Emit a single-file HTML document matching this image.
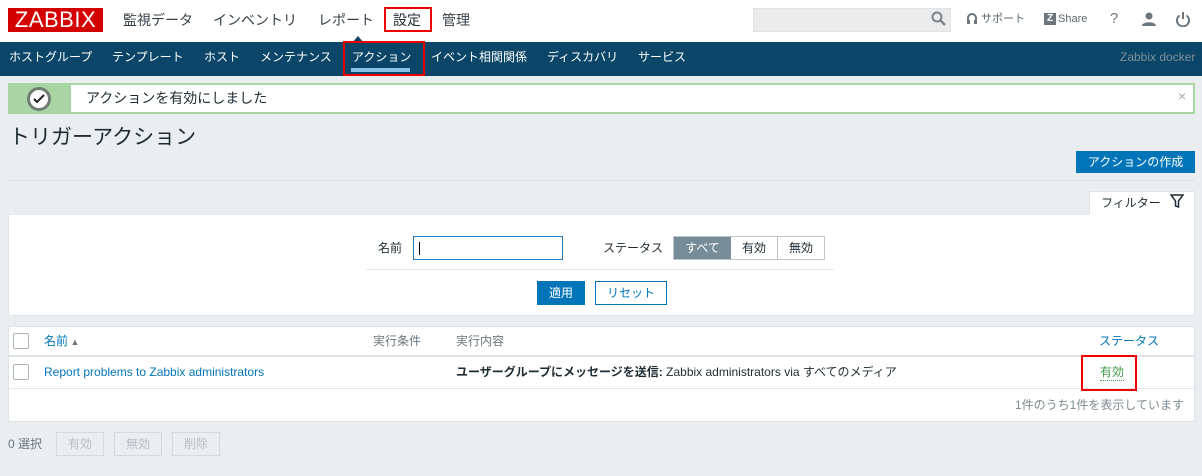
<!DOCTYPE html>
<html><head><meta charset="utf-8"><style>
*{box-sizing:border-box;margin:0;padding:0}
body{width:1202px;height:476px;background:#ebeef0;font-family:"Liberation Sans","Noto Sans CJK JP",sans-serif;font-size:12px;color:#1f2c33;position:relative;overflow:hidden;line-height:20px}
.a{position:absolute;white-space:nowrap}
.hdr{left:0;top:0;width:1202px;height:42px;background:#fff}
.logo{left:8px;top:8px;width:95px;height:24px;background:#d40000;color:#fff;font-size:22px;line-height:24px;text-align:center;letter-spacing:0.5px}
.mm{top:10px;font-size:14px;color:#384149}
.nav{left:0;top:42px;width:1202px;height:34px;background:#0b4668}
.sm{top:47px;font-size:12px;color:#fff}
.red{border:2px solid #e00}
.btn{border:1px solid #0275b8;text-align:center;line-height:20px;font-size:12px}
</style></head><body>
<div class="a hdr"></div>
<div class="a logo">ZABBIX</div>
<div class="a mm" style="left:123px">監視データ</div>
<div class="a mm" style="left:213px">インベントリ</div>
<div class="a mm" style="left:318px">レポート</div>
<div class="a mm" style="left:393px;color:#1f2c33">設定</div>
<div class="a mm" style="left:442px">管理</div>
<div class="a red" style="left:384px;top:7px;width:48px;height:25px"></div>
<div class="a" style="left:753px;top:8px;width:198px;height:24px;background:#ebebeb;border:1px solid #dfe4e7"></div>
<svg class="a" style="left:931px;top:11px" width="16" height="16"><circle cx="6" cy="6" r="4.5" fill="none" stroke="#7a858d" stroke-width="2"/><path d="M9.5 9.5L14 14" stroke="#7a858d" stroke-width="2.5"/></svg>
<svg class="a" style="left:966px;top:12px" width="12" height="14"><path d="M2 10V6a4 4 0 0 1 8 0v4" fill="none" stroke="#6b767e" stroke-width="2"/><rect x="1" y="8" width="3" height="4" fill="#6b767e"/><rect x="8" y="8" width="3" height="4" fill="#6b767e"/></svg>
<div class="a" style="left:981px;top:9px;font-size:11px;color:#5c6770">サポート</div>
<div class="a" style="left:1044px;top:13px;width:12px;height:12px;background:#6b767e;color:#fff;font-size:10px;font-weight:bold;line-height:12px;text-align:center">Z</div>
<div class="a" style="left:1058px;top:9px;font-size:11px;color:#5c6770">Share</div>
<div class="a" style="left:1110px;top:9px;font-size:15px;color:#6b767e">?</div>
<svg class="a" style="left:1142px;top:11px" width="14" height="16"><circle cx="7" cy="5" r="3.5" fill="#6b767e"/><path d="M0 15c0-5 14-5 14 0z" fill="#6b767e"/></svg>
<svg class="a" style="left:1175px;top:11px" width="16" height="16"><path d="M4.5 4.5a6 6 0 1 0 7 0" fill="none" stroke="#6b767e" stroke-width="2"/><path d="M8 1v7" stroke="#6b767e" stroke-width="2"/></svg>
<div class="a nav"></div>
<svg class="a" style="left:352px;top:36px" width="12" height="7"><path d="M0 7L6 0L12 7z" fill="#0b4668"/></svg>
<div class="a sm" style="left:9px">ホストグループ</div>
<div class="a sm" style="left:112px">テンプレート</div>
<div class="a sm" style="left:204px">ホスト</div>
<div class="a sm" style="left:260px">メンテナンス</div>
<div class="a sm" style="left:352px">アクション</div>
<div class="a" style="left:351px;top:68px;width:59px;height:4px;background:#8bc4eb"></div>
<div class="a red" style="left:343px;top:41px;width:82px;height:35px"></div>
<div class="a sm" style="left:431px">イベント相関関係</div>
<div class="a sm" style="left:547px">ディスカバリ</div>
<div class="a sm" style="left:638px">サービス</div>
<div class="a sm" style="left:1120px;color:#7e8f9b;font-size:12px">Zabbix docker</div>
<div class="a" style="left:8px;top:83px;width:1187px;height:31px;background:#fff;border:2px solid #a9d5a5"></div>
<div class="a" style="left:10px;top:85px;width:61px;height:27px;background:#a9d5a5"></div>
<div class="a" style="left:27px;top:87px;width:24px;height:24px;border-radius:50%;background:#fff;border:3px solid #6f7e73"></div>
<svg class="a" style="left:32px;top:92px" width="14" height="14"><path d="M2 7l3 3l7-7" fill="none" stroke="#222" stroke-width="2"/></svg>
<div class="a" style="left:86px;top:88px;font-size:14px">アクションを有効にしました</div>
<div class="a" style="left:1178px;top:86px;font-size:14px;color:#a0abb2">×</div>
<div class="a" style="left:9px;top:125px;font-size:21px;line-height:26px">トリガーアクション</div>
<div class="a btn" style="left:1076px;top:151px;width:119px;height:22px;background:#0275b8;color:#fff">アクションの作成</div>
<div class="a" style="left:8px;top:180px;width:1187px;height:1px;background:#dde2e5"></div>
<div class="a" style="left:1089px;top:191px;width:106px;height:25px;background:#fff;border:1px solid #dfe4e7;border-bottom:none"></div>
<div class="a" style="left:1101px;top:193px;font-size:12px">フィルター</div>
<svg class="a" style="left:1170px;top:194px" width="14" height="14"><path d="M1 1h12L8.5 7v6l-3-1V7z" fill="none" stroke="#1f2c33" stroke-width="1.5"/></svg>
<div class="a" style="left:8px;top:215px;width:1187px;height:101px;background:#fff;border:1px solid #dfe4e7;border-top:none"></div>
<div class="a" style="left:378px;top:238px">名前</div>
<div class="a" style="left:413px;top:236px;width:150px;height:24px;border:1px solid #1f7ab8"></div>
<div class="a" style="left:419px;top:242px;width:1px;height:13px;background:#000"></div>
<div class="a" style="left:603px;top:238px">ステータス</div>
<div class="a" style="left:673px;top:236px;width:152px;height:24px;border:1px solid #bcc5cb;background:#fff"></div>
<div class="a" style="left:674px;top:237px;width:57px;height:22px;background:#768d99;color:#fff;text-align:center;line-height:22px">すべて</div>
<div class="a" style="left:731px;top:237px;width:47px;height:22px;text-align:center;line-height:22px;border-right:1px solid #bcc5cb">有効</div>
<div class="a" style="left:778px;top:237px;width:46px;height:22px;text-align:center;line-height:22px">無効</div>
<div class="a" style="left:366px;top:269px;width:468px;height:1px;background:#e5e8ea"></div>
<div class="a btn" style="left:537px;top:281px;width:48px;height:24px;line-height:22px;background:#0275b8;color:#fff">適用</div>
<div class="a btn" style="left:595px;top:281px;width:72px;height:24px;line-height:22px;color:#0275b8;background:#fff">リセット</div>
<div class="a" style="left:8px;top:326px;width:1187px;height:96px;background:#fff;border:1px solid #dfe4e7"></div>
<div class="a" style="left:9px;top:355px;width:1185px;height:2px;background:#dfe4e7"></div>
<div class="a" style="left:9px;top:388px;width:1185px;height:1px;background:#e5e8ea"></div>
<div class="a" style="left:13px;top:333px;width:16px;height:16px;border:1px solid #aab4ba;border-radius:2px"></div>
<div class="a" style="left:13px;top:364px;width:16px;height:16px;border:1px solid #aab4ba;border-radius:2px"></div>
<div class="a" style="left:44px;top:331px;color:#0275b8">名前<span style="color:#6b767e;font-size:9px"> ▲</span></div>
<div class="a" style="left:373px;top:331px;color:#6b767e">実行条件</div>
<div class="a" style="left:456px;top:331px;color:#6b767e">実行内容</div>
<div class="a" style="left:1099px;top:331px;color:#0275b8">ステータス</div>
<div class="a" style="left:44px;top:362px;color:#0275b8">Report problems to Zabbix administrators</div>
<div class="a" style="left:456px;top:362px"><b>ユーザーグループにメッセージを送信:</b> Zabbix administrators via すべてのメディア</div>
<div class="a" style="left:1100px;top:364px;color:#429e47;border-bottom:1px dotted #429e47;line-height:16px">有効</div>
<div class="a red" style="left:1081px;top:355px;width:56px;height:36px"></div>
<div class="a" style="left:1015px;top:395px;color:#7e8a92">1件のうち1件を表示しています</div>
<div class="a" style="left:8px;top:434px;color:#6b767e">0 選択</div>
<div class="a" style="left:56px;top:432px;width:48px;height:24px;border:1px solid #d5dadd;color:#b6bec3;text-align:center;line-height:22px">有効</div>
<div class="a" style="left:114px;top:432px;width:48px;height:24px;border:1px solid #d5dadd;color:#b6bec3;text-align:center;line-height:22px">無効</div>
<div class="a" style="left:172px;top:432px;width:48px;height:24px;border:1px solid #d5dadd;color:#b6bec3;text-align:center;line-height:22px">削除</div>
</body></html>
